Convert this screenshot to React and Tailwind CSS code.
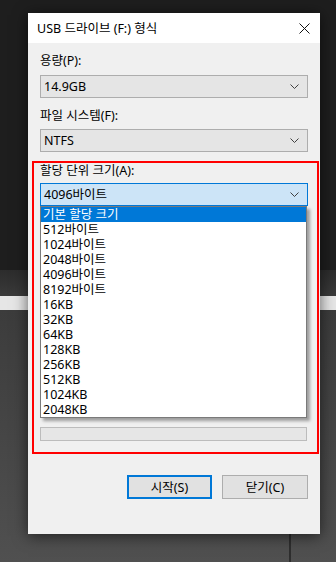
import React from "react";

const sizes = [
  "기본 할당 크기",
  "512바이트",
  "1024바이트",
  "2048바이트",
  "4096바이트",
  "8192바이트",
  "16KB",
  "32KB",
  "64KB",
  "128KB",
  "256KB",
  "512KB",
  "1024KB",
  "2048KB",
];

function Chevron() {
  return (
    <svg width="9" height="5" viewBox="0 0 9 5" className="shrink-0">
      <polyline points="0.5,0.5 4.5,4.5 8.5,0.5" fill="none" stroke="#404040" strokeWidth="1" />
    </svg>
  );
}

function Combo({ value, focused }) {
  return (
    <div
      className={
        focused
          ? "flex h-[23px] items-center justify-between border border-[#0078d7] bg-[#cce4f7] pl-[3px] pr-[8px]"
          : "flex h-[23px] items-center justify-between border border-[#adadad] bg-[#e5e5e5] pl-[3px] pr-[8px]"
      }
    >
      <span>{value}</span>
      <Chevron />
    </div>
  );
}

export default function App() {
  return (
    <div
      className="relative h-[562px] w-[336px] overflow-hidden text-[12.5px] leading-[15px] text-black"
      style={{ fontFamily: '"Noto Sans", "Noto Sans CJK KR", sans-serif' }}
    >
      {/* desktop behind the dialog */}
      <div className="flex h-full flex-col">
        <div className="h-[270px] bg-[#1e1e1e]" />
        <div className="h-[26px] bg-gradient-to-b from-[#2c2c2c] to-[#3a3a3a]" />
        <div className="h-[14px] bg-[#e6e6e6]" />
        <div className="flex-1 bg-gradient-to-b from-[#3c3c3c] to-[#505050]" />
      </div>
      <div className="absolute left-[289px] top-[534px] h-[30px] w-[2px] bg-[#2e2e2e]" />

      {/* dialog window */}
      <div className="absolute left-[28px] top-[13px] flex h-[521px] w-[292px] flex-col bg-[#f0f0f0] shadow-[0_2px_14px_rgba(0,0,0,0.6)]">
        <div className="flex h-[30px] items-center justify-between bg-white pl-[9px] pr-[10px]">
          <span>USB 드라이브 (F:) 형식</span>
          <svg width="11" height="11" viewBox="0 0 11 11">
            <path d="M0.5 0.5 L10.5 10.5 M10.5 0.5 L0.5 10.5" stroke="#111" strokeWidth="1" />
          </svg>
        </div>

        <div className="flex flex-1 flex-col px-[12px] pt-[10px]">
          <div className="mb-[7px]">용량(P):</div>
          <Combo value="14.9GB" />
          <div className="mb-[6px] mt-[10px]">파일 시스템(F):</div>
          <Combo value="NTFS" />

          <div className="-ml-[8px] -mr-[11px] mt-[9px] flex flex-col border-2 border-[#ff0000] pb-[11px] pl-[6px] pr-[9px]">
            <div className="mb-[5px]">할당 단위 크기(A):</div>
            <div className="relative">
              <Combo value="4096바이트" focused />
              <div className="absolute left-0 right-[1px] top-[23px] z-10 flex flex-col border border-[#7a7a7a] bg-white shadow-[3px_3px_3px_rgba(0,0,0,0.35)]">
                {sizes.map((s, i) => (
                  <div
                    key={s}
                    className={
                      i === 0
                        ? "h-[15px] overflow-hidden whitespace-nowrap bg-[#0078d7] pl-[2px] leading-[15px] text-white"
                        : "h-[15px] overflow-hidden whitespace-nowrap pl-[2px] leading-[15px]"
                    }
                  >
                    {s}
                  </div>
                ))}
              </div>
            </div>
            <div className="mr-[1px] mt-[221px] h-[14px] border border-[#bcbcbc] bg-[#e6e6e6]" />
          </div>

          <div className="mt-[21px] flex justify-end gap-[10px]">
            <button
              type="button"
              className="flex h-[24px] w-[85px] items-center justify-center border-2 border-[#0078d7] bg-[#e1e1e1]"
            >
              시작(S)
            </button>
            <button
              type="button"
              className="flex h-[24px] w-[86px] items-center justify-center border border-[#adadad] bg-[#e1e1e1]"
            >
              닫기(C)
            </button>
          </div>
        </div>
      </div>
    </div>
  );
}
